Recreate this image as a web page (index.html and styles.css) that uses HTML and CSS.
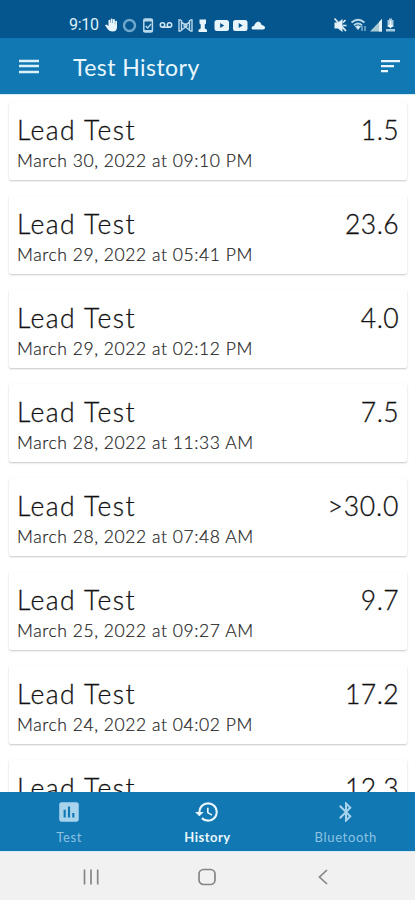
FILE: index.html
```html
<!DOCTYPE html>
<html lang="en">
<head>
<meta charset="utf-8">
<title>Test History</title>
<link rel="stylesheet" href="styles.css">
</head>
<body>
<div class="phone">
  <div class="status">
    <span class="clock">9:10</span>
    <svg class="status-left" width="162" height="16" viewBox="0 0 162 16" fill="#e8f5fc">
      <path d="M1 8.200 2.500 7.400 4.500 9V3.200q.8-1 1.800 0V6h.4V2q.9-1 1.900 0v4h.4V2.600q.9-1 1.900 0V7.400h.3V4.200q.9-.8 1.800 0V10q0 4.500-4.500 4.500-3.200 0-4.700-2.300Z"/>
      <circle cx="25.500" cy="8.500" r="5.500" fill="none" stroke="#6fa8cc" stroke-width="2.400"/>
      <rect x="39.800" y="2" width="8.600" height="13" rx="1.500" fill="none" stroke="#b9d8ea" stroke-width="1.500"/>
      <path d="M39.600 2h9v2.500h-9zM39.600 13h9v2h-9z" fill="#b9d8ea"/>
      <path d="m41.600 9 2 2 3.500-4" fill="none" stroke="#b9d8ea" stroke-width="1.300"/>
      <g fill="none" stroke="#d2e8f5" stroke-width="1.500"><circle cx="58.500" cy="8" r="2.200"/><circle cx="65.500" cy="8" r="2.200"/><path d="M58.500 10.200h7"/></g>
      <g fill="none" stroke="#b9d8ea" stroke-width="1.400"><path d="M77 3h-2v11h2M86 3h2v11h-2M77.500 3v11M85.500 3v11M77.500 5l4 3 4-3M77.500 13l4-3 4 3"/><circle cx="81.500" cy="8.500" r="1.500"/></g>
      <path d="M95.500 2.500h6.500v4l-1.200 1v4l2.200 1.200v2.300h-8.500v-2.300l2.200-1.200v-4l-1.200-1Z"/>
      <path fill-rule="evenodd" d="M113 3h9.500q2.500 0 2.500 2.500V11.500q0 2.500-2.500 2.500H113q-2.500 0-2.500-2.500V5.500q0-2.500 2.500-2.500Zm3.200 3v5l4-2.500ZM131.500 3h9.500q2.500 0 2.500 2.500V11.500q0 2.500-2.500 2.500h-9.500q-2.500 0-2.500-2.500V5.500q0-2.500 2.500-2.500Zm3.200 3v5l4-2.500Z"/>
      <path d="M149.500 12.500q-2 0-2-1.600 0-1.800 2.500-2Q151.500 5 154.500 4.500q2.500.5 3.200 3.500 3.300.8 3.300 2.700 0 1.800-2 1.800Z"/>
    </svg>
    <svg class="status-right" width="64" height="16" viewBox="0 0 64 16" fill="#e4f2f8">
      <path d="M1.500 5.500h3.500L9.500 2v13L5 11.500H1.500Z"/><path d="m1.500 1.500 11.500 12.500M10 8.500h3.500M10 5.500l2.500-2.500" fill="none" stroke="#e4f2f8" stroke-width="1.700"/>
      <g fill="none" stroke="#b9d9e8" stroke-width="1.800"><path d="M18.500 5.500Q25 0 31.500 5.500M21 8.200q4-3.400 8 0"/></g>
      <path d="m22.500 9.500 2.500 3 2.500-3q-2.500-1.500-5 0ZM29 9v5M32 14V9" stroke="#b9d9e8"/>
      <path d="M49 2v12.500H37Z" fill="#aacbd3"/><path d="M49 2v12.500h-3V5Z"/>
      <path d="M54.500 3H56V1.500h3V3h1.500v7h-6ZM53 12h9v2.500h-9Z" fill="#a5cae0"/><path d="M57.500 4v6m-2-2 2 2.500L59.500 8" fill="none" stroke="#fff" stroke-width="1.300"/>
    </svg>
  </div>
  <header class="appbar">
    <svg width="20" height="16" viewBox="0 0 20 16" fill="#dcf2fb"><path d="M0 .8h20v2.400H0zM0 5.800h20v2.400H0zM0 11.800h20v2.400H0z"/></svg>
    <h1>Test History</h1>
    <svg class="sort" width="20" height="14" viewBox="0 0 20 14" fill="#e9f7fd"><path d="M1 0h19v2.300H1zM1 5h13v2.300H1zM1 10h7v2.300H1z"/></svg>
  </header>
  <main class="list">
    <article class="card"><div class="row"><h2>Lead Test</h2><span class="value">1.5</span></div><p>March 30, 2022 at 09:10 PM</p></article>
    <article class="card"><div class="row"><h2>Lead Test</h2><span class="value">23.6</span></div><p>March 29, 2022 at 05:41 PM</p></article>
    <article class="card"><div class="row"><h2>Lead Test</h2><span class="value">4.0</span></div><p>March 29, 2022 at 02:12 PM</p></article>
    <article class="card"><div class="row"><h2>Lead Test</h2><span class="value">7.5</span></div><p>March 28, 2022 at 11:33 AM</p></article>
    <article class="card"><div class="row"><h2>Lead Test</h2><span class="value wide">&gt;30.0</span></div><p>March 28, 2022 at 07:48 AM</p></article>
    <article class="card"><div class="row"><h2>Lead Test</h2><span class="value">9.7</span></div><p>March 25, 2022 at 09:27 AM</p></article>
    <article class="card"><div class="row"><h2>Lead Test</h2><span class="value">17.2</span></div><p>March 24, 2022 at 04:02 PM</p></article>
    <article class="card"><div class="row"><h2>Lead Test</h2><span class="value">12.3</span></div></article>
  </main>
  <nav class="tabs">
    <div class="tab"><svg width="26" height="26" viewBox="0 0 24 24"><path d="M19 3H5c-1.100 0-2 .9-2 2v14c0 1.100.9 2 2 2h14c1.100 0 2-.9 2-2V5c0-1.100-.9-2-2-2zM9 17H7v-7h2v7zm4 0h-2V7h2v10zm4 0h-2v-4h2v4z"/></svg><span>Test</span></div>
    <div class="tab active"><svg width="26" height="26" viewBox="0 0 24 24"><path d="M13 3a9 9 0 0 0-9 9H1l3.890 3.890.07.14L9 12H6c0-3.870 3.130-7 7-7s7 3.130 7 7-3.130 7-7 7c-1.930 0-3.680-.79-4.940-2.060l-1.420 1.420A8.954 8.954 0 0 0 13 21a9 9 0 0 0 0-18zm-1 5v5l4.280 2.540.72-1.210-3.500-2.080V8H12z"/></svg><span>History</span></div>
    <div class="tab"><svg width="24" height="24" viewBox="0 0 24 24"><path d="M17.710 7.710 12 2h-1v7.590L6.410 5 5 6.410 10.590 12 5 17.590 6.410 19 11 14.410V22h1l5.710-5.710L13.410 12l4.300-4.290zM13 5.830l1.880 1.880L13 9.590V5.830zm1.880 10.460L13 18.170v-3.760l1.880 1.880z"/></svg><span>Bluetooth</span></div>
  </nav>
  <footer class="system">
    <svg width="16" height="16" viewBox="0 0 16 16"><path d="M1.500 .5v15M8 .5v15M14.700 .5v15"/></svg>
    <svg class="home" width="18" height="18" viewBox="0 0 18 18"><rect x="1" y="1.500" width="16" height="15" rx="4.500"/></svg>
    <svg width="10" height="16" viewBox="0 0 10 16"><path d="M9 1 1.500 8 9 15"/></svg>
  </footer>
</div>
</body>
</html>
```
FILE: styles.css
```css
* { box-sizing: border-box; }
body { margin: 0; background: #fff; font-family: Lato, sans-serif; }
svg { display: block; flex: none; }
h1, h2, p { margin: 0; font-weight: 400; white-space: nowrap; }
.phone { width: 415px; height: 900px; display: flex; flex-direction: column; overflow: hidden; }
.status { height: 38px; flex: none; background: #05568f; display: flex; align-items: center; padding: 11px 18px 0 69px; }
.clock { font: 400 16px/18px Roboto, sans-serif; color: #dcf0fa; width: 35px; letter-spacing: -.3px; }
.status-right { margin-left: auto; }
.appbar { height: 56px; flex: none; background: #1178b4; display: flex; align-items: center; padding: 2px 15px 0 19px; }
.appbar h1 { margin-left: 34px; font-size: 23px; line-height: 30px; letter-spacing: .45px; color: #e9f7fd; }
.sort { margin-left: auto; }
.list { flex: 1; min-height: 0; overflow: hidden; border-top: 1px solid #d5eff8; padding: 7px 8px 0 9px; display: flex; flex-direction: column; gap: 16px; }
.card { flex: none; height: 78px; padding: 10px 8px 0; background: #fff; border-radius: 2px; box-shadow: 0 1px 2px rgba(0,0,0,.22); }
.row { display: flex; justify-content: space-between; height: 37px; }
.card h2, .value { font-size: 26.5px; line-height: 36px; font-weight: 300; color: #111; -webkit-text-stroke: .3px #111; }
.card h2 { letter-spacing: 1.45px; }
.value { letter-spacing: .4px; }
.wide { letter-spacing: .75px; }
.card p { font-size: 17.5px; line-height: 24px; font-weight: 300; letter-spacing: .56px; color: #222; -webkit-text-stroke: .2px #222; }
.tabs { height: 60px; flex: none; background: #1178b4; display: grid; grid-template-columns: repeat(3, 1fr); border-bottom: 1px solid #d5eaf4; }
.tab { display: flex; flex-direction: column; align-items: center; padding-top: 7px; color: #8dc3e1; fill: #a8d3ec; font-size: 13px; line-height: 18px; letter-spacing: .65px; }
.tab svg { height: 26px; }
.tab span { margin-top: 3px; }
.active { color: #e9f7fd; fill: #e9f7fd; font-weight: 700; letter-spacing: .5px; }
.system { flex: none; height: 48px; background: #f1f1f1; display: flex; align-items: center; justify-content: space-between; padding: 2px 87px 0 83px; }
.system svg { fill: none; stroke: #858585; stroke-width: 1.7; }
.system .home { margin-right: 4px; }
```
